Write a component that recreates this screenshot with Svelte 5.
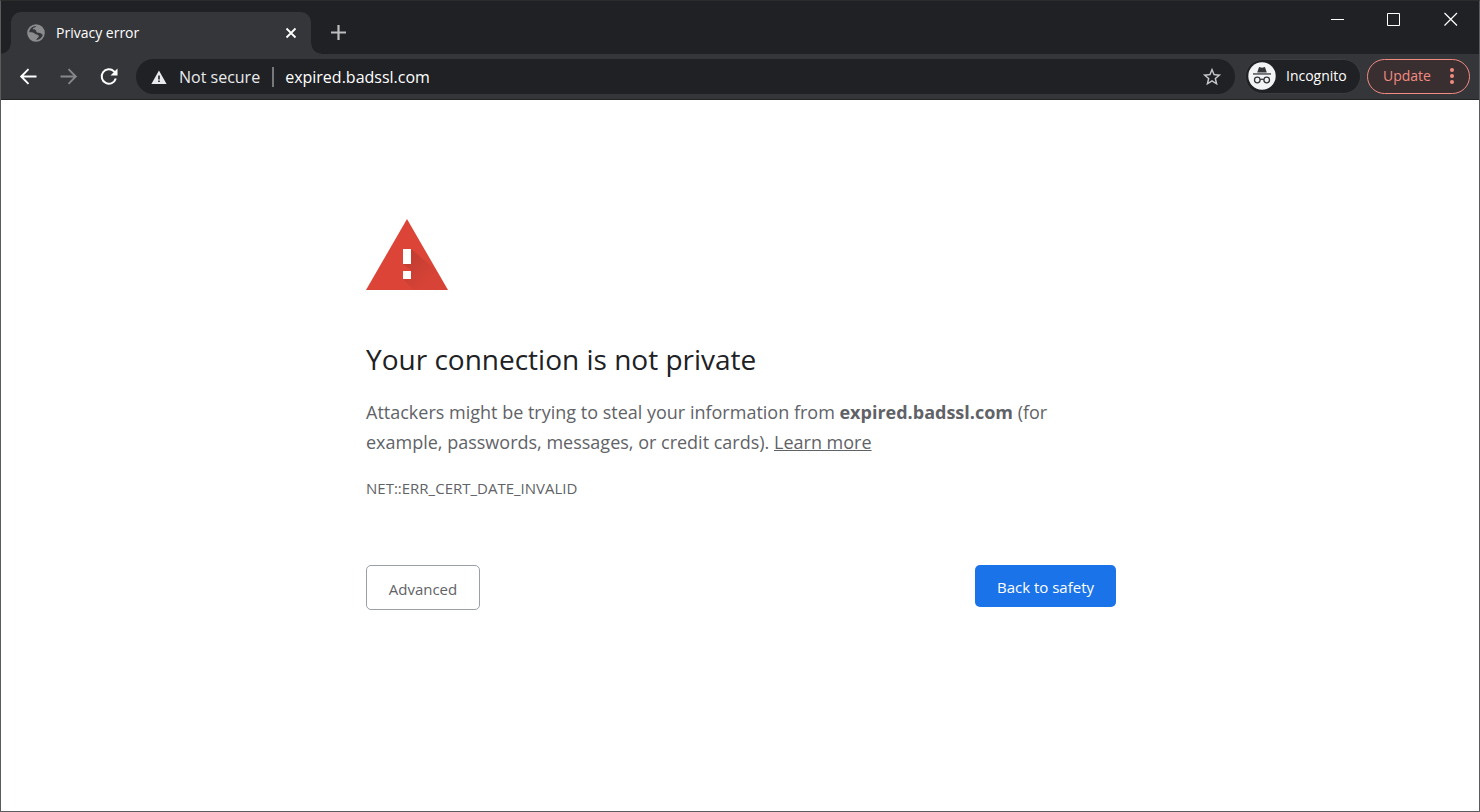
<script>
  const host = 'expired.badssl.com';
  const errorCode = 'NET::ERR_CERT_DATE_INVALID';

  let address = $state(host);
</script>

<div class="window">
  <header>
    <div class="tab-strip">
      <div class="tab">
        <svg class="favicon" viewBox="0 0 20 20" width="20" height="20" aria-hidden="true">
          <circle cx="10" cy="10" r="7.900" fill="#35363a" stroke="#8b8c8e" stroke-width="1.800" />
          <path
            d="M2 9.500c1.500-.3 4-.3 5.500.3 1.200.6 1.500 1.400 3 1.600 1.600.2 2.500.9 2.300 2.200-.2 1.200-1.500 1.400-2 2.300-.4.800-.8 1.700-1.600 1.800C5 17.300 1.300 13 2 9.500z"
            fill="#8b8c8e"
          />
          <path
            d="M11 2.200c-1 .8-1.200 1.800-2.600 2.300-1 .4-2 .9-1.500 1.700.5.800 2 .2 2.900 1 .8.7.2 1.700 1.200 2.300 1.100.7 2.600.2 3.700.8 1.200.7 1.500 1.500 2.600 1.300C19 7 16 1.500 11 2.200z"
            fill="#8b8c8e"
          />
        </svg>
        <span class="tab-title">Privacy error</span>
        <button class="icon-button" aria-label="Close tab">
          <svg viewBox="0 0 16 16" width="16" height="16">
            <path d="M3.500 3.500l9 9M12.500 3.500l-9 9" stroke="#fff" stroke-width="1.800" />
          </svg>
        </button>
      </div>
      <button class="icon-button new-tab" aria-label="New tab">
        <svg viewBox="0 0 20 20" width="20" height="20">
          <path d="M9.500 2v15M2 9.500h15" stroke="#bdbec0" stroke-width="2.200" />
        </svg>
      </button>
      <div class="window-controls">
        <button class="icon-button" aria-label="Minimize">
          <svg viewBox="0 0 14 14" width="14" height="14">
            <path d="M1 7.500h13" stroke="#fff" />
          </svg>
        </button>
        <button class="icon-button" aria-label="Maximize">
          <svg viewBox="0 0 14 14" width="14" height="14">
            <path d="M.5 1.500h12v12H.5z" fill="none" stroke="#fff" />
          </svg>
        </button>
        <button class="icon-button" aria-label="Close">
          <svg viewBox="0 0 14 14" width="14" height="14">
            <path d="M.5 1l12.500 12.500M13 1L.5 13.500" stroke="#fff" stroke-width="1.200" />
          </svg>
        </button>
      </div>
    </div>

    <div class="toolbar">
      <nav>
        <button class="icon-button" aria-label="Back">
          <svg viewBox="0 0 20 20" width="20" height="20" fill="none" stroke="#fff" stroke-width="1.900">
            <path d="M17.500 9.500H2.500M9.500 2.200L2.200 9.500l7.300 7.300" />
          </svg>
        </button>
        <button class="icon-button" aria-label="Forward">
          <svg viewBox="0 0 20 20" width="20" height="20" fill="none" stroke="#86878a" stroke-width="1.900">
            <path d="M1.500 9.500h15M9.500 2.200l7.300 7.300-7.300 7.300" />
          </svg>
        </button>
        <button class="icon-button" aria-label="Reload">
          <svg viewBox="0 0 20 20" width="20" height="20">
            <path d="M16.800 11.500A7.200 7.200 0 1 1 15 4.400l1.200 1.200" fill="none" stroke="#fff" stroke-width="2" />
            <path d="M18.500 1.500v7h-7z" fill="#fff" />
          </svg>
        </button>
      </nav>

      <div class="omnibox">
        <button class="security">
          <svg viewBox="0 0 16 16" width="16" height="16" aria-hidden="true">
            <path d="M8 1.500L15.600 15H.4z" fill="#e8eaed" />
            <path d="M7.200 6.500h1.600v4H7.200zM7.200 11.500h1.600v1.600H7.200z" fill="#202124" />
          </svg>
          <span>Not secure</span>
        </button>
        <input type="text" aria-label="Address" bind:value={address} spellcheck="false" />
        <button class="icon-button" aria-label="Bookmark this page">
          <svg viewBox="0 0 24 24" width="22" height="22">
            <path
              d="M22 9.240l-7.190-.62L12 2 9.190 8.630 2 9.240l5.460 4.730L5.820 21 12 17.270 18.180 21l-1.630-7.030zM12 15.400l-3.760 2.270 1-4.280-3.320-2.880 4.380-.38L12 6.100l1.710 4.040 4.380.38-3.320 2.880 1 4.280z"
              fill="#c6c7c9"
            />
          </svg>
        </button>
      </div>

      <button class="chip incognito">
        <svg viewBox="0 0 28 28" width="28" height="28" aria-hidden="true">
          <circle cx="14" cy="14" r="13.700" fill="#f1f3f4" />
          <g fill="#35363a">
            <path d="M10.800 5.700c.2-.5.7-.7 1.200-.5l2 .6 2-.6c.5-.2 1 0 1.200.5l1.600 4.800H9.200z" />
            <path d="M5 11.300h18v1.300H5z" />
          </g>
          <g fill="none" stroke="#35363a" stroke-width="1.300">
            <circle cx="9.300" cy="18" r="2.800" />
            <circle cx="18.700" cy="18" r="2.800" />
            <path d="M12.100 17.700c1.200-.8 2.600-.8 3.800 0" />
          </g>
        </svg>
        <span>Incognito</span>
      </button>
      <button class="chip update">
        <span>Update</span>
        <svg viewBox="0 0 6 18" width="6" height="18" fill="#f28b82" aria-hidden="true">
          <circle cx="3" cy="3" r="2" />
          <circle cx="3" cy="9" r="2" />
          <circle cx="3" cy="15" r="2" />
        </svg>
      </button>
    </div>
  </header>

  <main>
    <svg class="warning" viewBox="0 0 82 71" width="82" height="71" aria-hidden="true">
      <defs>
        <linearGradient id="shade" gradientUnits="userSpaceOnUse" x1="40" y1="40" x2="62" y2="62">
          <stop offset="0" stop-color="#b0382e" />
          <stop offset="1" stop-color="#b0382e" stop-opacity="0.150" />
        </linearGradient>
      </defs>
      <path d="M41 0l41 71H0z" fill="#db4437" />
      <path d="M45 30l25 21 12 20H48L37 60l8-8v-1l-8-6z" fill="url(#shade)" opacity="0.600" />
      <path d="M37 30h8v15h-8zM37 52h8v8h-8z" fill="#fff" />
    </svg>
    <h1>Your connection is not private</h1>
    <p class="message">
      Attackers might be trying to steal your information from <strong>{host}</strong> (for example,
      passwords, messages, or credit cards). <a href="#learn-more">Learn more</a>
    </p>
    <p class="code">{errorCode}</p>
    <div class="actions">
      <button class="advanced">Advanced</button>
      <button class="safety">Back to safety</button>
    </div>
  </main>
</div>

<style>
  :global(body) {
    background: #fff;
    font-family: 'Segoe UI', 'Open Sans', 'Noto Sans', sans-serif;
  }

  .window {
    box-sizing: border-box;
    min-height: 100vh;
    border: 1px solid #5a5b5d;
    border-top-color: #2b2c2b;
  }

  button {
    padding: 0;
    border: none;
    background: none;
    font-family: inherit;
    cursor: pointer;
  }

  svg {
    display: block;
    flex: none;
  }

  .icon-button {
    display: flex;
    align-items: center;
    justify-content: center;
  }

  /* tab strip */
  .tab-strip {
    display: flex;
    align-items: flex-end;
    height: 53px;
    padding-left: 10px;
    background: #202124;
  }

  .tab {
    position: relative;
    box-sizing: border-box;
    display: flex;
    align-items: center;
    gap: 10px;
    width: 300px;
    height: 42px;
    padding: 0 12px 0 15px;
    border-radius: 10px 10px 0 0;
    background: #35363a;
  }

  .tab::before,
  .tab::after {
    content: '';
    position: absolute;
    bottom: 0;
    width: 10px;
    height: 10px;
  }

  .tab::before {
    right: 100%;
    background: radial-gradient(circle at 0 0, #202124 9px, #35363a 10px);
  }

  .tab::after {
    left: 100%;
    background: radial-gradient(circle at 100% 0, #202124 9px, #35363a 10px);
  }

  .tab-title {
    flex: 1;
    color: #fff;
    font-size: 14px;
    line-height: 20px;
  }

  .new-tab {
    width: 32px;
    height: 42px;
    margin-left: 12px;
  }

  .window-controls {
    display: flex;
    align-self: flex-start;
    margin-left: auto;
  }

  .window-controls .icon-button {
    width: 57px;
    height: 36px;
  }

  /* toolbar */
  .toolbar {
    display: flex;
    align-items: center;
    height: 45px;
    padding-right: 9px;
    border-bottom: 1px solid #232326;
    background: #35363a;
  }

  nav {
    display: flex;
    padding: 0 7px 0 8px;
  }

  nav .icon-button {
    width: 40px;
    height: 35px;
  }

  .omnibox {
    box-sizing: border-box;
    display: flex;
    flex: 1;
    align-items: center;
    height: 35px;
    margin-right: 10px;
    padding: 0 12px 0 15px;
    border-radius: 18px;
    background: #202124;
  }

  .security {
    display: flex;
    align-items: center;
    gap: 12px;
    height: 20px;
    padding-right: 12px;
    border-right: 2px solid #77787b;
    color: #e8eaed;
    font-size: 16px;
    line-height: 20px;
  }

  input {
    flex: 1;
    min-width: 0;
    padding: 0 0 0 11px;
    border: none;
    outline: none;
    background: none;
    color: #fff;
    font-family: inherit;
    font-size: 16px;
    line-height: 24px;
  }

  .chip {
    box-sizing: border-box;
    display: flex;
    align-items: center;
    height: 35px;
    border-radius: 18px;
    font-size: 14px;
    line-height: 20px;
  }

  .incognito {
    gap: 10px;
    width: 116px;
    margin-right: 6px;
    padding: 0 0 1px 2px;
    border: 1px solid #3c3d41;
    background: #202124;
    color: #fff;
  }

  .update {
    justify-content: space-between;
    width: 103px;
    padding: 0 14px 1px 15px;
    border: 1px solid #f28b82;
    background: #392e30;
    color: #f28b82;
  }

  /* interstitial */
  main {
    max-width: 750px;
    margin: 0 auto;
    padding: 119px 24px 48px 26px;
    color: #5f6368;
  }

  h1 {
    margin: 49px 0 0;
    color: #202124;
    font-size: 28px;
    font-weight: 400;
    line-height: 40px;
  }

  .message {
    max-width: 690px;
    margin: 18px 0 0;
    font-size: 18px;
    line-height: 30px;
  }

  .message a {
    color: inherit;
  }

  .code {
    margin: 21px 0 0;
    font-size: 15px;
    line-height: 20px;
  }

  .actions {
    display: flex;
    flex-wrap: wrap;
    align-items: flex-start;
    justify-content: space-between;
    gap: 12px;
    margin-top: 67px;
  }

  .actions button {
    box-sizing: border-box;
    padding-top: 2px;
    border-radius: 5px;
    font-size: 15px;
  }

  .advanced {
    min-width: 114px;
    height: 45px;
    border: 1px solid #9aa0a6;
    color: #5f6368;
  }

  .safety {
    min-width: 141px;
    height: 42px;
    background: #1a73e8;
    color: #fff;
  }
</style>
